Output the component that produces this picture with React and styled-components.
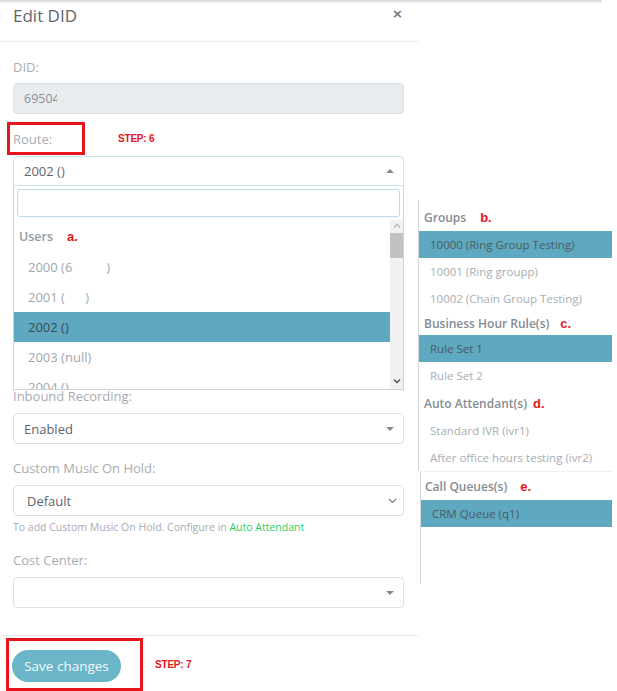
import React from "react";
import styled, { createGlobalStyle } from "styled-components";

const GlobalStyle = createGlobalStyle`
  body {
    margin: 0;
    background: #fff;
    font-family: "Open Sans", "Lato", sans-serif;
  }
`;

const users = [
  { id: 1, text: "2000 (6          )" },
  { id: 2, text: "2001 (      )" },
  { id: 3, text: "2002 ()", active: true },
  { id: 4, text: "2003 (null)" },
  { id: 5, text: "2004 ()" },
];

const sections = [
  {
    title: "Groups",
    mark: "b.",
    gap: 14,
    head: 27,
    items: [
      { text: "10000 (Ring Group Testing)", active: true },
      { text: "10001 (Ring groupp)" },
      { text: "10002 (Chain Group Testing)" },
    ],
  },
  {
    title: "Business Hour Rule(s)",
    mark: "c.",
    gap: 11,
    head: 23,
    items: [{ text: "Rule Set 1", active: true }, { text: "Rule Set 2" }],
  },
  {
    title: "Auto Attendant(s)",
    mark: "d.",
    gap: 6,
    head: 28,
    items: [
      { text: "Standard IVR (ivr1)" },
      { text: "After office hours testing (ivr2)" },
    ],
  },
];

export default function App() {
  return (
    <>
      <GlobalStyle />
      <Shade />
      <Page>
        <Modal>
          <Header>
            <Title>Edit DID</Title>
            <Close>×</Close>
          </Header>
          <Body>
            <Label>DID:</Label>
            <Input>
              <span>6950</span>
              <Cut>4</Cut>
            </Input>
            <StepRow>
              <RedBox>
                <Label>Route:</Label>
              </RedBox>
              <Step gap={33}>STEP: 6</Step>
            </StepRow>
            <Select open>
              2002 ()
              <Caret up />
            </Select>
            <Dropdown>
              <Search />
              <ListWrap>
                <List>
                  <GroupHead>
                    Users<Mark gap={14}>a.</Mark>
                  </GroupHead>
                  {users.map((u) => (
                    <Option key={u.id} active={u.active}>
                      {u.text}
                    </Option>
                  ))}
                </List>
                <Scrollbar>
                  <ScrollArrow>
                    <svg width="8" height="6" viewBox="0 0 8 6">
                      <path d="M1 4.5 L4 1.5 L7 4.5" fill="none" stroke="#b8b8b8" strokeWidth="1.3" />
                    </svg>
                  </ScrollArrow>
                  <Thumb />
                  <ScrollArrow bottom>
                    <svg width="8" height="6" viewBox="0 0 8 6">
                      <path d="M1 1.5 L4 4.5 L7 1.5" fill="none" stroke="#555" strokeWidth="1.5" />
                    </svg>
                  </ScrollArrow>
                </Scrollbar>
              </ListWrap>
            </Dropdown>
            <Label overlap>Inbound Recording:</Label>
            <Select>
              Enabled
              <Caret />
            </Select>
            <Label spaced>Custom Music On Hold:</Label>
            <Select native>
              Default
              <svg width="9" height="6" viewBox="0 0 9 6">
                <path d="M1 1 L4.5 4.5 L8 1" fill="none" stroke="#777" strokeWidth="1.1" />
              </svg>
            </Select>
            <Help>
              To add Custom Music On Hold. Configure in <Link>Auto Attendant</Link>
            </Help>
            <Label cost>Cost Center:</Label>
            <Select>
              <span />
              <Caret />
            </Select>
          </Body>
          <Footer>
            <SaveBox>
              <SaveButton>Save changes</SaveButton>
            </SaveBox>
            <Step gap={12}>STEP: 7</Step>
          </Footer>
        </Modal>
        <Side>
          <Piece>
            {sections.map((s) => (
              <div key={s.title}>
                <SectionHead h={s.head}>
                  {s.title}
                  <Mark gap={s.gap}>{s.mark}</Mark>
                </SectionHead>
                {s.items.map((it) => (
                  <SideItem key={it.text} active={it.active}>
                    {it.text}
                  </SideItem>
                ))}
              </div>
            ))}
          </Piece>
          <Piece second>
            <SectionHead h={28} inset>
              Call Queues(s)
              <Mark gap={13}>e.</Mark>
            </SectionHead>
            <SideItem active>CRM Queue (q1)</SideItem>
          </Piece>
        </Side>
      </Page>
    </>
  );
}

const Shade = styled.div`
  height: 4px;
  width: 602px;
  background: linear-gradient(#d4d4d4, #f4f4f4 70%, #fff);
  border-radius: 0 0 4px 0;
`;

const Page = styled.div`
  display: flex;
  align-items: flex-start;
`;

const Modal = styled.div`
  width: 418px;
  display: flex;
  flex-direction: column;
`;

const Header = styled.div`
  height: 37px;
  padding: 0 14px 0 13px;
  border-bottom: 1px solid #ececec;
  display: flex;
  justify-content: space-between;
  align-items: flex-start;
`;

const Title = styled.h4`
  margin: 0;
  font-size: 17px;
  line-height: 24px;
  font-weight: 400;
  color: #60656b;
`;

const Close = styled.span`
  font-family: "DejaVu Sans", sans-serif;
  font-size: 13px;
  font-weight: 700;
  line-height: 20px;
  color: #707070;
  margin-right: 1px;
`;

const Body = styled.div`
  padding: 17px 14px 27px 13px;
  display: flex;
  flex-direction: column;
  border-bottom: 1px solid #ececec;
`;

const Label = styled.label`
  font-size: 13px;
  line-height: 16px;
  color: #a7acb2;
  margin-top: ${(p) => (p.overlap ? "-2px" : p.spaced ? "16px" : p.cost ? "19px" : "0")};
  margin-bottom: ${(p) => (p.overlap || p.spaced || p.cost ? "9px" : "8px")};
`;

const Input = styled.div`
  height: 29px;
  border: 1px solid #dcdfe3;
  border-radius: 4px;
  background: #e9ecef;
  display: flex;
  align-items: center;
  padding: 0 10px;
  font-size: 12.5px;
  color: #8a8f95;
`;

const Cut = styled.span`
  display: inline-block;
  width: 4px;
  overflow: hidden;
`;

const StepRow = styled.div`
  display: flex;
  align-items: center;
  margin: 8px 0 1px -6px;
`;

const RedBox = styled.div`
  width: 69px;
  height: 27px;
  border: 3px solid #e8141c;
  padding-left: 3px;
  display: flex;
  align-items: center;
  box-sizing: content-box;
  & > label {
    margin: 0;
  }
`;

const Step = styled.span`
  font-family: "Liberation Sans", Arial, sans-serif;
  font-weight: 700;
  font-size: 10px;
  letter-spacing: -0.2px;
  color: #e8141c;
  margin-left: ${(p) => p.gap}px;
`;

const Select = styled.div`
  height: ${(p) => (p.open ? "28px" : "29px")};
  border: 1px solid ${(p) => (p.open ? "#cfe3ea" : "#dcdfe3")};
  border-radius: ${(p) => (p.open ? "4px 4px 0 0" : "4px")};
  display: flex;
  align-items: center;
  justify-content: space-between;
  padding-right: ${(p) => (p.native ? "6px" : "9px")};
  padding-left: ${(p) => (p.native ? "13px" : "10px")};
  font-size: 13px;
  color: #5f656b;
`;

const Caret = styled.span`
  width: 0;
  height: 0;
  border-left: 4px solid transparent;
  border-right: 4px solid transparent;
  ${(p) =>
    p.up ? "border-bottom: 4px solid #888;" : "border-top: 4px solid #888;"}
`;

const Dropdown = styled.div`
  height: 203px;
  border: 1px solid #cfd3d7;
  border-top: none;
  display: flex;
  flex-direction: column;
`;

const Search = styled.div`
  margin: 3px;
  height: 26px;
  border: 1px solid #b9dde9;
  border-radius: 3px;
`;

const ListWrap = styled.div`
  flex: 1;
  display: flex;
  overflow: hidden;
`;

const List = styled.div`
  flex: 1;
  overflow: hidden;
`;

const GroupHead = styled.div`
  height: 32px;
  display: flex;
  align-items: center;
  padding-left: 5px;
  font-size: 12.5px;
  font-weight: 600;
  color: #959ba2;
`;

const Mark = styled.span`
  font-family: "Liberation Sans", Arial, sans-serif;
  font-weight: 700;
  font-size: 13px;
  color: #e8141c;
  margin-left: ${(p) => p.gap}px;
`;

const Option = styled.div`
  height: 30px;
  flex-shrink: 0;
  display: flex;
  align-items: center;
  padding-left: 14px;
  font-size: 13px;
  white-space: pre;
  color: ${(p) => (p.active ? "#3d4a50" : "#a2a7ad")};
  background: ${(p) => (p.active ? "#5ea9c0" : "transparent")};
`;

const Scrollbar = styled.div`
  width: 13px;
  background: #f1f1f1;
  display: flex;
  flex-direction: column;
`;

const ScrollArrow = styled.div`
  height: 12px;
  display: flex;
  align-items: center;
  justify-content: center;
  margin-top: ${(p) => (p.bottom ? "auto" : "0")};
  margin-bottom: ${(p) => (p.bottom ? "2px" : "0")};
`;

const Thumb = styled.div`
  height: 25px;
  margin-top: 1px;
  background: #c1c1c1;
`;

const Help = styled.div`
  margin-top: 5px;
  font-size: 10.5px;
  line-height: 12px;
  color: #a7acb2;
`;

const Link = styled.span`
  color: #26d26a;
`;

const Footer = styled.div`
  display: flex;
  align-items: center;
  padding: 2px 0 0 6px;
`;

const SaveBox = styled.div`
  border: 3px solid #e8141c;
  padding: 9px 19px 6px 3px;
`;

const SaveButton = styled.button`
  width: 109px;
  height: 32px;
  border: none;
  border-radius: 16px;
  background: #6ab5c8;
  color: #f4fafc;
  font-family: inherit;
  font-size: 13.5px;
  padding: 0;
`;

const Side = styled.div`
  width: 194px;
  padding-top: 196px;
  display: flex;
  flex-direction: column;
`;

const Piece = styled.div`
  border-left: 1px solid #d6d6d6;
  padding-top: ${(p) => (p.second ? "0" : "4px")};
  margin-left: ${(p) => (p.second ? "2px" : "0")};
  height: ${(p) => (p.second ? "112px" : "auto")};
  ${(p) => (p.second ? "border-top: 1px solid #f0f0f0;" : "")}
`;

const SectionHead = styled.div`
  height: ${(p) => p.h}px;
  display: flex;
  align-items: center;
  padding-left: ${(p) => (p.inset ? "4px" : "5px")};
  font-size: 12px;
  font-weight: 600;
  color: #848b92;
`;

const SideItem = styled.div`
  height: 27px;
  display: flex;
  align-items: center;
  padding-left: 11px;
  font-size: 11.5px;
  color: ${(p) => (p.active ? "#4b5a61" : "#a8adb2")};
  background: ${(p) => (p.active ? "#5ea9c0" : "transparent")};
`;
